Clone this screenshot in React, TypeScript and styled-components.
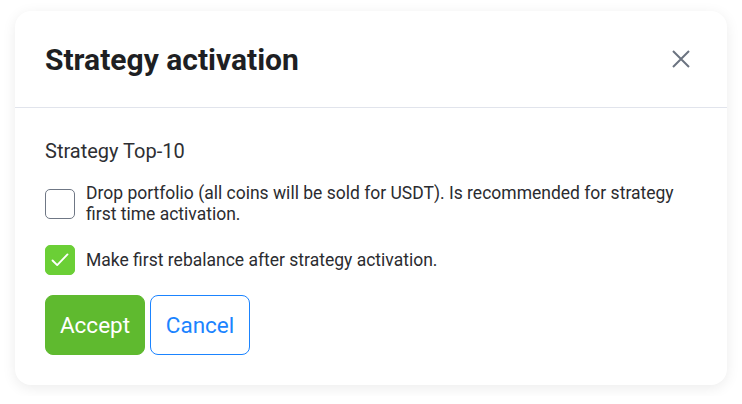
import React, { useState } from 'react'
import styled, { createGlobalStyle } from 'styled-components'

const GlobalStyle = createGlobalStyle`
  body {
    margin: 0;
    background: #ffffff;
    font-family: Roboto, "Liberation Sans", Arial, sans-serif;
  }
`

const Page = styled.div`
  padding: 11px 15px;
`

const Modal = styled.div`
  width: 712px;
  background: #ffffff;
  border-radius: 16px;
  box-shadow: 0 3px 14px rgba(0, 0, 0, 0.08);
`

const Header = styled.div`
  height: 96px;
  display: flex;
  align-items: center;
  justify-content: space-between;
  padding: 0 36px 0 30px;
  border-bottom: 1px solid #e1e4ec;
`

const Title = styled.h2`
  margin: 0;
  font-size: 30px;
  font-weight: 700;
  color: #1e1f23;
`

const CloseButton = styled.button`
  display: flex;
  padding: 0;
  border: none;
  background: none;
  cursor: pointer;
  color: #6b7380;
`

const Body = styled.div`
  display: flex;
  flex-direction: column;
  gap: 20px;
  padding: 31px 30px 30px;
`

const StrategyName = styled.div`
  font-size: 20px;
  line-height: 24px;
  color: #2e2f33;
`

const OptionRow = styled.label`
  display: flex;
  align-items: center;
  gap: 11px;
  cursor: pointer;
`

const Box = styled.span<{ checked: boolean }>`
  flex: none;
  width: 30px;
  height: 30px;
  box-sizing: border-box;
  border-radius: 5px;
  display: flex;
  align-items: center;
  justify-content: center;
  background: ${({ checked }) => (checked ? '#6bcf36' : '#ffffff')};
  border: 1px solid ${({ checked }) => (checked ? '#6bcf36' : '#6f7785')};
`

const OptionText = styled.span`
  font-size: 17.5px;
  line-height: 21px;
  color: #2b2c30;
`

const Actions = styled.div`
  display: flex;
  gap: 5px;
`

const Button = styled.button<{ primary?: boolean }>`
  width: 100px;
  height: 60px;
  border-radius: 8px;
  font-family: inherit;
  font-size: 22.5px;
  cursor: pointer;
  background: ${({ primary }) => (primary ? '#5fba2f' : '#ffffff')};
  color: ${({ primary }) => (primary ? '#ffffff' : '#1b84ff')};
  border: 1px solid ${({ primary }) => (primary ? '#5fba2f' : '#1b84ff')};
`

function CheckBox({ checked }: { checked: boolean }) {
  return (
    <Box checked={checked}>
      {checked && (
        <svg width="30" height="30" viewBox="0 0 30 30" fill="none">
          <path d="M7 15.5l5 5 11-11.5" stroke="#ffffff" strokeWidth="2" strokeLinecap="round" strokeLinejoin="round" />
        </svg>
      )}
    </Box>
  )
}

export default function App() {
  const [drop, setDrop] = useState(false)
  const [rebalance, setRebalance] = useState(true)

  return (
    <Page>
      <GlobalStyle />
      <Modal>
        <Header>
          <Title>Strategy activation</Title>
          <CloseButton aria-label="close">
            <svg width="20" height="20" viewBox="0 0 20 20" fill="none">
              <path d="M2 2l16 16M18 2L2 18" stroke="currentColor" strokeWidth="2" />
            </svg>
          </CloseButton>
        </Header>
        <Body>
          <StrategyName>Strategy Top-10</StrategyName>
          <OptionRow onClick={() => setDrop(!drop)}>
            <CheckBox checked={drop} />
            <OptionText>
              Drop portfolio (all coins will be sold for USDT). Is recommended for strategy first time activation.
            </OptionText>
          </OptionRow>
          <OptionRow onClick={() => setRebalance(!rebalance)}>
            <CheckBox checked={rebalance} />
            <OptionText>Make first rebalance after strategy activation.</OptionText>
          </OptionRow>
          <Actions>
            <Button primary>Accept</Button>
            <Button>Cancel</Button>
          </Actions>
        </Body>
      </Modal>
    </Page>
  )
}
